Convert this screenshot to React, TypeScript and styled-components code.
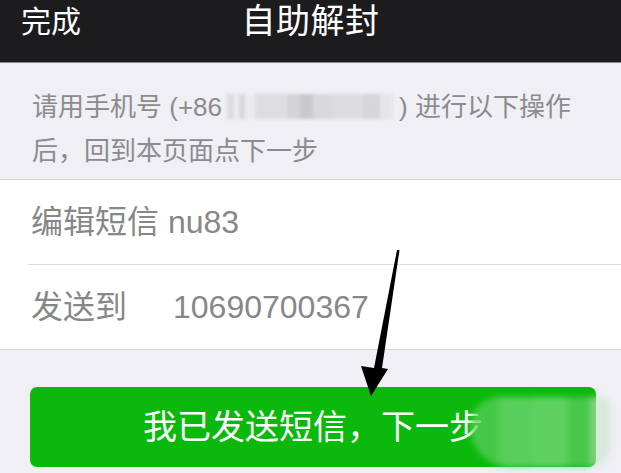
import React from 'react';
import styled, { createGlobalStyle } from 'styled-components';

const GlobalStyle = createGlobalStyle`
  html, body {
    margin: 0;
    padding: 0;
    background: #efeff4;
  }
  body {
    font-family: "Liberation Sans", "Noto Sans CJK SC", sans-serif;
    overflow: hidden;
  }
`;

const Page = styled.div`
  position: relative;
  width: 621px;
  height: 473px;
  background: #efeff4;
  overflow: hidden;
`;

const NavBar = styled.header`
  display: grid;
  grid-template-columns: 1fr auto 1fr;
  align-items: center;
  height: 63px;
  padding: 0 21px;
  background: #1c1c1e;
  color: #fff;
  border-bottom: 1px solid #8a8a8a;
  box-sizing: border-box;
`;

const NavButton = styled.span`
  font-size: 30px;
  line-height: 1;
  margin-top: -18px;
`;

const NavTitle = styled.span`
  font-size: 34px;
  line-height: 1;
  margin-top: -20px;
  letter-spacing: 0.5px;
`;

const Notice = styled.p`
  margin: 0;
  padding: 22px 22px 6px 32px;
  font-size: 26px;
  line-height: 44px;
  color: #8b8b90;
  border-bottom: 1px solid #d6d6da;
`;

const PhoneMask = styled.span`
  display: inline-block;
  vertical-align: -3px;
  width: 166px;
  height: 25px;
  margin: 0 6px 0 5px;
  background: linear-gradient(
    90deg,
    #dcdcdf 0 4%,
    #ececef 4% 7%,
    #d8d8db 7% 11%,
    #ececef 11% 17%,
    #dedee1 17% 36%,
    #d4d4d7 36% 44%,
    #cacacd 44% 52%,
    #d9d9dc 52% 64%,
    #dddde0 64% 82%,
    #d6d6d9 82% 92%,
    #e6e6e9 92% 100%
  );
  filter: blur(1.5px);
`;

const List = styled.section`
  background: #fff;
  padding-left: 28px;
  border-bottom: 1px solid #d6d6da;
`;

const Row = styled.div<{ $last?: boolean }>`
  height: 84px;
  line-height: 84px;
  padding-left: 3px;
  font-size: 32px;
  color: #878787;
  white-space: nowrap;
  border-bottom: ${(p) => (p.$last ? 'none' : '1px solid #dcdcdc')};
`;

const RowLabel = styled.span`
  display: inline-block;
  width: 142px;
`;

const Footer = styled.div`
  padding: 37px 25px 0 30px;
`;

const NextButton = styled.button`
  position: relative;
  display: flex;
  align-items: center;
  justify-content: center;
  width: 566px;
  height: 80px;
  border: none;
  border-radius: 7px;
  background: #0ab90c;
  color: #fff;
  font-family: "Noto Sans CJK SC", sans-serif;
  font-size: 34px;
  padding: 0 0 6px;
  overflow: visible;
`;

const Smudge = styled.span`
  position: absolute;
  right: -14px;
  top: 10px;
  width: 140px;
  height: 70px;
  border-radius: 30px 10px 20px 40px;
  background: linear-gradient(
    90deg,
    rgba(90, 205, 90, 0.75) 0 20%,
    rgba(110, 212, 110, 0.8) 20% 45%,
    rgba(125, 218, 125, 0.75) 45% 70%,
    rgba(100, 205, 100, 0.7) 70% 86%,
    rgba(200, 230, 200, 0.6) 86% 100%
  );
  filter: blur(3px);
`;

const Arrow = styled.svg`
  position: absolute;
  left: 0;
  top: 0;
  pointer-events: none;
`;

export default function App() {
  return (
    <>
      <GlobalStyle />
      <Page>
        <NavBar>
          <NavButton>完成</NavButton>
          <NavTitle>自助解封</NavTitle>
          <span />
        </NavBar>
        <Notice>
          <span>请用手机号 (+86</span>
          <PhoneMask />
          <span>) 进行以下操作</span>
          <br />
          <span>后，回到本页面点下一步</span>
        </Notice>
        <List>
          <Row>编辑短信 nu83</Row>
          <Row $last>
            <RowLabel>发送到</RowLabel>
            10690700367
          </Row>
        </List>
        <Footer>
          <NextButton>
            我已发送短信，下一步
            <Smudge />
          </NextButton>
        </Footer>
        <Arrow width="621" height="473" viewBox="0 0 621 473">
          <polygon
            points="397,250 399.5,250 382,368 388,369 371,396 361,366 374,368"
            fill="#000"
          />
        </Arrow>
      </Page>
    </>
  );
}
